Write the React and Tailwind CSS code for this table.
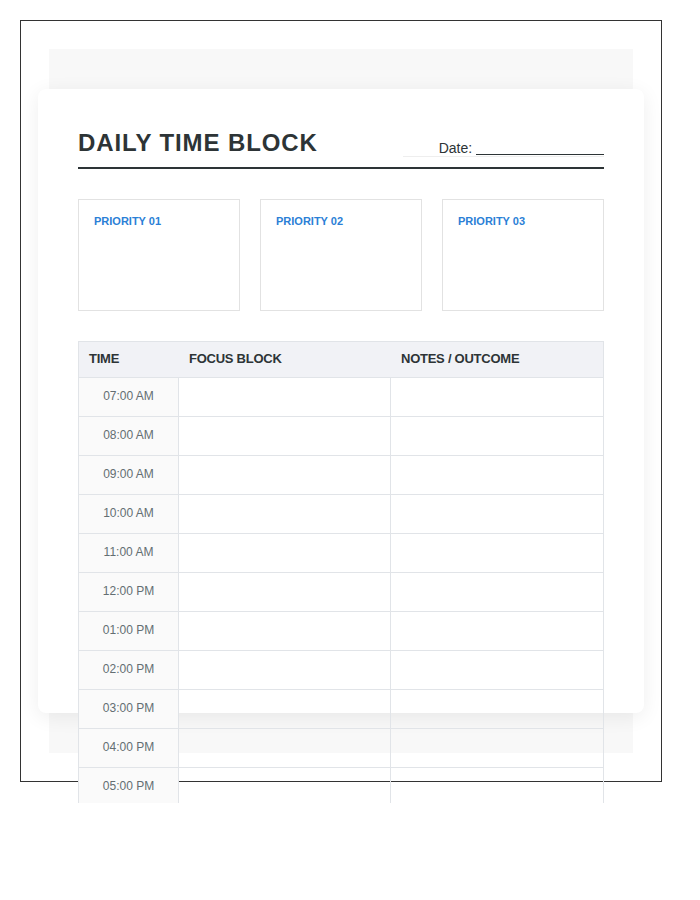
export default function App() {
  const times = [
    "07:00 AM",
    "08:00 AM",
    "09:00 AM",
    "10:00 AM",
    "11:00 AM",
    "12:00 PM",
    "01:00 PM",
    "02:00 PM",
    "03:00 PM",
    "04:00 PM",
    "05:00 PM",
  ];
  return (
    <div
      className="h-[803px] overflow-hidden bg-white p-[20px] leading-[1.15]"
      style={{ fontFamily: '"Liberation Sans", Arial, sans-serif' }}
    >
      <div className="w-[642px] border border-[#333] p-[28px]">
        <div className="bg-[#f8f8f8] py-[40px]">
          <div className="-mx-[11px] h-[624px] rounded-lg bg-white px-[40px] pt-[40px] shadow-[0_4px_20px_rgba(0,0,0,0.07)]">
            <div className="flex items-end justify-between border-b-2 border-[#2d3436] pb-[10px]">
              <h1 className="text-[24px] leading-[1.15] font-bold tracking-[0.9px] text-[#2d3436]">
                DAILY TIME BLOCK
              </h1>
              <div className="w-[201px] border-b border-[#eeeeee] text-right text-[14px] leading-[1.15] text-[#2d3436]">
                Date:{" "}
                <span className="inline-block w-[128px] border-b border-[#2d3436] align-[-2px]"></span>
              </div>
            </div>

            <div className="mt-[30px] grid grid-cols-3 gap-[20px]">
              {["PRIORITY 01", "PRIORITY 02", "PRIORITY 03"].map((p) => (
                <div
                  key={p}
                  className="h-[112px] border border-[#e2e2e2] p-[15px]"
                >
                  <div className="text-[11px] leading-[1.15] font-bold text-[#2b80d6]">{p}</div>
                </div>
              ))}
            </div>

            <div className="mt-[30px] border-x border-t border-[#e1e4e8]">
              <div className="grid grid-cols-[100px_212px_1fr] bg-[#f1f2f6] text-[13px] font-bold tracking-[-0.25px] text-[#2d3436]">
                <div className="flex h-[36px] items-center border-b border-[#e1e4e8] px-[10px]">
                  TIME
                </div>
                <div className="flex h-[36px] items-center border-b border-[#e1e4e8] px-[10px]">
                  FOCUS BLOCK
                </div>
                <div className="flex h-[36px] items-center border-b border-[#e1e4e8] px-[10px]">
                  NOTES / OUTCOME
                </div>
              </div>
              {times.map((t) => (
                <div
                  key={t}
                  className="grid grid-cols-[100px_212px_1fr]"
                >
                  <div className="flex h-[39px] items-center justify-center border-r border-b border-[#e1e4e8] bg-[#fafafa] pt-[1px] text-[12px] text-[#636e72]">
                    {t}
                  </div>
                  <div className="h-[39px] border-r border-b border-[#e1e4e8]"></div>
                  <div className="h-[39px] border-b border-[#e1e4e8]"></div>
                </div>
              ))}
            </div>
          </div>
        </div>
      </div>
    </div>
  );
}
